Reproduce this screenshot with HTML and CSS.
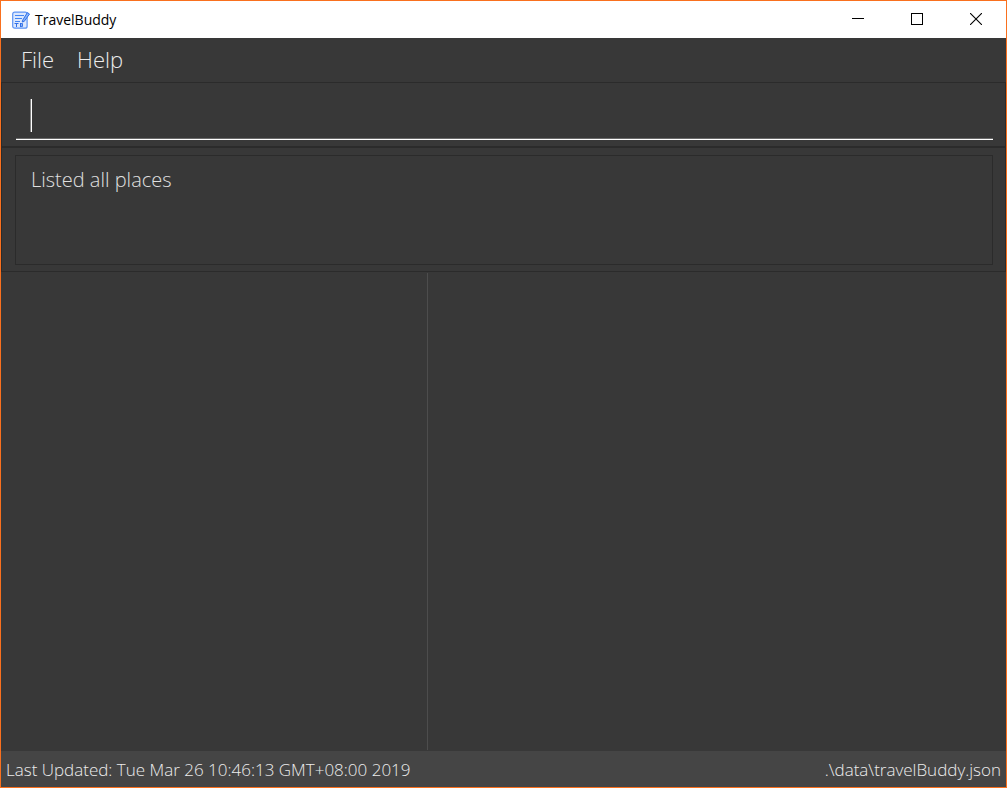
FILE: index.html
```html
<!DOCTYPE html>
<html lang="en">
<head>
<meta charset="utf-8">
<title>TravelBuddy</title>
<link rel="stylesheet" href="styles.css">
</head>
<body>
<div class="window">
  <header class="titlebar">
    <svg class="app-icon" width="18" height="18" viewBox="0 0 18 18" fill="none" stroke="#4285f4" aria-hidden="true">
      <rect x="0.7" y="1.2" width="14.4" height="16" rx="2" fill="#dce8fd" stroke="#5b93f5" stroke-width="1.2"/>
      <path d="M3 4.5H12M3 7.5H10M3 10.5H8" stroke-width="1.2"/>
      <path d="M2.5 12.5H6.5M4.5 12.5V16M8.5 12V16" stroke="#2f6fe8"/>
      <path d="M8.5 12.5H10.5V15.5H8.5M8.5 14H10.5" stroke="#2f6fe8" stroke-width="0.9"/>
      <path d="M10.2 11L10.8 9L15.4 1.6L17.5 3L12.2 10.4Z" fill="#8db7fa" stroke="#2f6fe8"/>
    </svg>
    <h1 class="title">TravelBuddy</h1>
    <div class="controls">
      <button class="control" type="button" aria-label="Minimize"><svg width="12" height="12" viewBox="0 0 12 12"><path d="M0 5.5H12" stroke="#000"/></svg></button>
      <button class="control" type="button" aria-label="Maximize"><svg width="12" height="12" viewBox="0 0 12 12"><rect x="0.5" y="0.5" width="11" height="11" fill="none" stroke="#000"/></svg></button>
      <button class="control" type="button" aria-label="Close"><svg width="12" height="12" viewBox="0 0 12 12"><path d="M0 0L12 12M12 0L0 12" stroke="#000" stroke-width="1.1"/></svg></button>
    </div>
  </header>
  <nav class="menubar">
    <button class="menu" type="button">File</button>
    <button class="menu" type="button">Help</button>
  </nav>
  <section class="pane command">
    <div class="field">
      <input class="command-input" type="text" aria-label="Command">
      <span class="caret"></span>
    </div>
  </section>
  <section class="pane result">
    <output class="result-box">Listed all places</output>
  </section>
  <main class="split">
    <section class="list" aria-label="Places"></section>
    <section class="detail" aria-label="Map"></section>
  </main>
  <footer class="statusbar">
    <span>Last Updated: Tue Mar 26 10:46:13 GMT+08:00 2019</span>
    <span>.\data\travelBuddy.json</span>
  </footer>
</div>
</body>
</html>
```
FILE: styles.css
```css
* {
  box-sizing: border-box;
}

body {
  margin: 0;
  font-family: "Open Sans", "Noto Sans", sans-serif;
  font-weight: 300;
  color: #ececec;
  background: #383838;
}

.window {
  display: flex;
  flex-direction: column;
  min-height: 100vh;
  border: 1px solid #f9701e;
}

.titlebar {
  display: flex;
  align-items: center;
  height: 37px;
  padding-left: 11px;
  gap: 5px;
  background: #fff;
  color: #000;
}

.title {
  margin: 0;
  font-size: 14px;
  font-weight: 400;
}

.controls {
  display: flex;
  align-self: stretch;
  margin-left: auto;
  padding: 0 1px 1px 0;
}

.control {
  display: flex;
  align-items: center;
  justify-content: center;
  width: 59px;
  padding: 0;
  border: 0;
  background: none;
}

.menubar {
  display: flex;
  height: 44px;
  padding: 0 8px;
}

.menu {
  padding: 0 12px 2px;
  border: 0;
  background: none;
  color: inherit;
  font: inherit;
  font-size: 22px;
  line-height: 28px;
}

.menu + .menu {
  padding-left: 11px;
}

.pane {
  padding: 8px 12px 6px 13px;
  border: 1px solid #2b2b2b;
}

.command {
  padding-left: 14px;
  border-bottom-width: 2px;
}

.field {
  position: relative;
  height: 49px;
}

.command-input {
  display: block;
  width: 100%;
  height: 49px;
  padding: 0 14px;
  border: 0;
  border-bottom: 1px solid #fff;
  outline: none;
  background: none;
  box-shadow: inset 0 -1px #6a6a6a;
  color: #fff;
  font: inherit;
  font-size: 22px;
}

.caret {
  position: absolute;
  top: 8px;
  left: 14px;
  width: 2px;
  height: 33px;
  border-left: 1px solid #808080;
  background: #fff;
}

.result {
  padding-top: 7px;
  border-top: 0;
}

.result-box {
  display: block;
  height: 110px;
  padding: 10px 15px;
  border: 1px solid #2b2b2b;
  color: #e0e0e0;
  font-size: 20px;
  line-height: 28px;
}

.split {
  display: flex;
  flex: 1;
  padding: 1px 0;
}

.list {
  width: 425px;
  margin-right: 1px;
}

.detail {
  flex: 1;
  border-left: 1px solid #4d4d4d;
}

.statusbar {
  display: flex;
  align-items: center;
  justify-content: space-between;
  height: 36px;
  padding: 0 5px;
  background: #454545;
  font-size: 17px;
}
```
